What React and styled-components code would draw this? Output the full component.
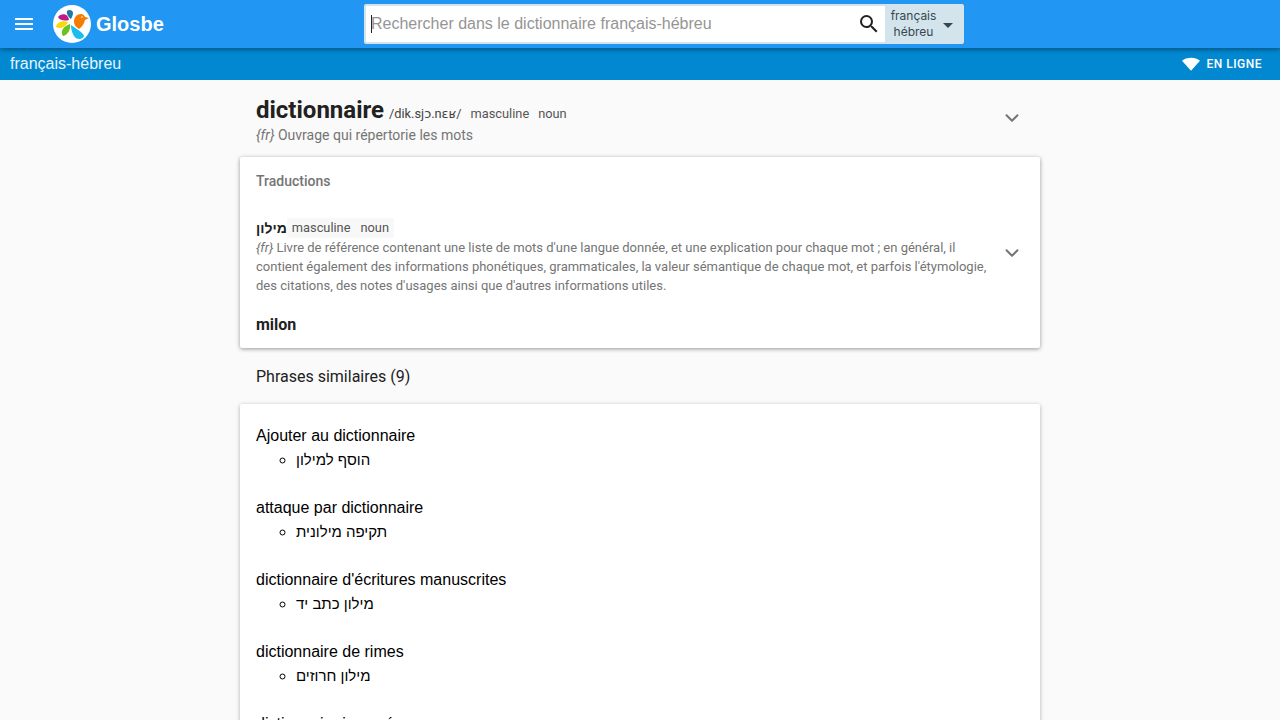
import styled, { createGlobalStyle } from "styled-components";
import { ChevronDown } from "lucide-react";

const phrases = [
  { fr: "Ajouter au dictionnaire", he: "הוסף למילון" },
  { fr: "attaque par dictionnaire", he: "תקיפה מילונית" },
  { fr: "dictionnaire d'écritures manuscrites", he: "מילון כתב יד" },
  { fr: "dictionnaire de rimes", he: "מילון חרוזים" },
  { fr: "dictionnaire inversé", he: "מילון הפוך" },
];

const GlobalStyle = createGlobalStyle`
  html, body {
    margin: 0;
    height: 720px;
    overflow: hidden;
    background: #fafafa;
    font-family: Roboto, sans-serif;
  }
`;

function Logo() {
  return (
    <LogoDisc viewBox="0 0 38 38">
      <circle cx="19" cy="19" r="19" fill="#fff" />
      <path d="M14 6c2-2 6-1 6 2 0 2-1 4-2 6-2-1-5-5-4-8z" fill="#1f7a9c" />
      <path d="M5 12c3-4 10-4 11 3-4 1-9 1-11-3z" fill="#c2188b" />
      <path d="M3 22c0-4 6-7 12-5-2 4-7 8-12 5z" fill="#f5d90a" />
      <path d="M10 31c-3-4 0-10 7-12 1 5-2 11-7 12z" fill="#6ac21c" />
      <path d="M18 20c4 3 13 8 13 11-1 4-8 4-10 0-2-3-3-7-3-11z" fill="#1bbcee" />
      <path d="M21 17c0-5 3-8 7-8 2 0 3 1 4 3l4 1-4 2c-1 4-3 7-6 9-3-2-5-4-5-7z" fill="#f57c00" />
      <circle cx="29" cy="12" r="0.8" fill="#fff" />
    </LogoDisc>
  );
}

export default function App() {
  return (
    <>
      <GlobalStyle />
      <TopBar>
        <MenuButton viewBox="0 0 24 24">
          <path d="M3 18h18v-2H3v2zm0-5h18v-2H3v2zm0-7v2h18V6H3z" />
        </MenuButton>
        <Logo />
        <Brand>Glosbe</Brand>
        <SearchBox>
          <SearchField>
            <Caret />
            <Placeholder>Rechercher dans le dictionnaire français-hébreu</Placeholder>
          </SearchField>
          <SearchIcon viewBox="0 0 24 24">
            <path d="M15.5 14h-.79l-.28-.27A6.47 6.47 0 0 0 16 9.5 6.5 6.5 0 1 0 9.5 16c1.61 0 3.09-.59 4.23-1.57l.27.28v.79l5 4.99L20.49 19l-4.99-5zm-6 0C7.01 14 5 11.99 5 9.5S7.01 5 9.5 5 14 7.01 14 9.5 11.99 14 9.5 14z" />
          </SearchIcon>
          <LangPicker>
            <LangNames>
              <span>français</span>
              <span>hébreu</span>
            </LangNames>
            <LangArrow />
          </LangPicker>
        </SearchBox>
      </TopBar>
      <SubBar>
        <SubTitle>français-hébreu</SubTitle>
        <OnlineStatus>
          <svg width="18" height="18" viewBox="0 0 24 24" fill="#fff">
            <path d="M12 21 0 7.5C3 5 7.3 3.5 12 3.5S21 5 24 7.5L12 21z" />
          </svg>
          EN LIGNE
        </OnlineStatus>
      </SubBar>
      <Main>
        <Entry>
          <div>
            <HeadLine>
              <Word>dictionnaire</Word>
              <Phonetic>/dik.sjɔ.nɛʁ/</Phonetic>
              <Tag>masculine</Tag>
              <Tag>noun</Tag>
            </HeadLine>
            <Definition>
              <i>{"{fr}"}</i> Ouvrage qui répertorie les mots
            </Definition>
          </div>
          <Chevron $top={11} size={22} strokeWidth={2.2} />
        </Entry>
        <Card>
          <CardLabel>Traductions</CardLabel>
          <Translation>
            <div>
              <TranslationLine>
                <HebrewWord>מילון</HebrewWord>
                <TagGroup>
                  <span>masculine</span>
                  <span>noun</span>
                </TagGroup>
              </TranslationLine>
              <TranslationText>
                <i>{"{fr}"}</i> Livre de référence contenant une liste de mots d'une langue donnée, et une
                explication pour chaque mot ; en général, il contient également des informations
                phonétiques, grammaticales, la valeur sémantique de chaque mot, et parfois
                l'étymologie, des citations, des notes d'usages ainsi que d'autres informations utiles.
              </TranslationText>
            </div>
            <Chevron $top={25} size={22} strokeWidth={2.2} />
          </Translation>
          <Transliteration>milon</Transliteration>
        </Card>
        <SectionTitle>Phrases similaires (9)</SectionTitle>
        <PhraseCard>
          {phrases.map((phrase) => (
            <Phrase key={phrase.fr}>
              <div>{phrase.fr}</div>
              <PhraseList>
                <li>{phrase.he}</li>
              </PhraseList>
            </Phrase>
          ))}
        </PhraseCard>
      </Main>
    </>
  );
}

const TopBar = styled.header`
  position: relative;
  z-index: 2;
  height: 48px;
  display: flex;
  align-items: center;
  background: #2196f3;
  box-shadow: 0 2px 4px rgba(0, 0, 0, 0.35);
`;

const MenuButton = styled.svg`
  width: 24px;
  height: 24px;
  margin-left: 12px;
  fill: #fff;
`;

const LogoDisc = styled.svg`
  width: 38px;
  height: 38px;
  margin-left: 17px;
  flex: none;
`;

const Brand = styled.div`
  width: 268px;
  margin-left: 5px;
  color: #fff;
  font: bold 20px "Liberation Sans", Arial, sans-serif;
`;

const SearchBox = styled.div`
  width: 600px;
  height: 40px;
  box-sizing: border-box;
  display: flex;
  align-items: center;
  background: #fff;
  border: 2px solid #d3e4ed;
  border-radius: 2px;
`;

const SearchField = styled.div`
  flex: 1;
  display: flex;
  align-items: center;
  padding-left: 5px;
`;

const Caret = styled.span`
  width: 1px;
  height: 18px;
  margin-right: -1px;
  background: #222;
`;

const Placeholder = styled.span`
  color: #959595;
  font: 16px "Liberation Sans", Arial, sans-serif;
`;

const SearchIcon = styled.svg`
  width: 24px;
  height: 24px;
  margin-right: 4px;
  fill: #212121;
`;

const LangPicker = styled.div`
  width: 77px;
  height: 36px;
  display: flex;
  align-items: center;
  background: #d3e4ed;
`;

const LangNames = styled.div`
  width: 57px;
  display: flex;
  flex-direction: column;
  align-items: center;
  color: #37474f;
  font: 12px/16px Inter, sans-serif;
`;

const LangArrow = styled.span`
  margin-left: 1px;
  border-left: 5px solid transparent;
  border-right: 5px solid transparent;
  border-top: 5px solid #37474f;
  margin-top: 2px;
`;

const SubBar = styled.div`
  height: 32px;
  display: flex;
  align-items: center;
  justify-content: space-between;
  padding: 0 18px 0 10px;
  background: #0288d1;
  color: #fff;
`;

const SubTitle = styled.div`
  font: 16px "Liberation Sans", Arial, sans-serif;
  color: #e6f4fc;
`;

const OnlineStatus = styled.div`
  display: flex;
  align-items: center;
  gap: 6px;
  font: 500 12px Roboto, sans-serif;
  letter-spacing: 0.5px;
`;

const Main = styled.main`
  width: 800px;
  margin: 0 auto;
`;

const Entry = styled.section`
  height: 77px;
  box-sizing: border-box;
  padding: 16px 16px 0;
  display: flex;
  justify-content: space-between;
  align-items: flex-start;
`;

const HeadLine = styled.div`
  display: flex;
  align-items: baseline;
  height: 28px;
`;

const Word = styled.span`
  font: 700 24px/28px Roboto, sans-serif;
  color: #212121;
`;

const Phonetic = styled.span`
  margin-left: 5px;
  font: 12.8px Roboto, "DejaVu Sans", sans-serif;
  color: #444;
`;

const Tag = styled.span`
  margin-left: 9px;
  font: 12.8px Roboto, sans-serif;
  color: #555;
`;

const Definition = styled.div`
  margin-top: 1px;
  font: 14px/20px Roboto, sans-serif;
  color: #757575;
`;

const Chevron = styled(ChevronDown)`
  flex: none;
  margin: ${(props) => props.$top}px 1px 0 0;
  color: #757575;
`;

const Card = styled.section`
  height: 191px;
  box-sizing: border-box;
  padding: 16px 16px 0;
  background: #fff;
  border-radius: 2px;
  box-shadow: 0 1px 4px rgba(0, 0, 0, 0.4);
`;

const CardLabel = styled.div`
  font: 500 14px/16px Roboto, sans-serif;
  color: #757575;
`;

const Translation = styled.div`
  margin-top: 28px;
  display: flex;
  align-items: flex-start;
  justify-content: space-between;
  gap: 12px;
`;

const TranslationLine = styled.div`
  display: flex;
  align-items: center;
  height: 21px;
`;

const HebrewWord = styled.strong`
  font: 700 14px Roboto, "Liberation Sans", sans-serif;
  color: #212121;
`;

const TagGroup = styled.span`
  display: flex;
  gap: 10px;
  padding: 0 5px;
  background: #f8f8f8;
  font: 12.8px/20px Roboto, sans-serif;
  color: #555;
`;

const TranslationText = styled.div`
  font: 13px/19px Roboto, sans-serif;
  color: #757575;
`;

const Transliteration = styled.div`
  margin-top: 20px;
  font: 700 16px/20px Roboto, sans-serif;
  color: #212121;
`;

const SectionTitle = styled.h2`
  margin: 0;
  height: 56px;
  padding-left: 16px;
  display: flex;
  align-items: center;
  font: 16px Roboto, sans-serif;
  color: #212121;
`;

const PhraseCard = styled.section`
  padding: 21px 16px 20px;
  background: #fff;
  border-radius: 2px;
  box-shadow: 0 1px 4px rgba(0, 0, 0, 0.3);
`;

const Phrase = styled.div`
  height: 72px;
  font: 16px/22px "Liberation Sans", Arial, sans-serif;
  color: #000;
`;

const PhraseList = styled.ul`
  margin: 0;
  padding-left: 40px;
  list-style: circle;
  font-size: 15px;
  line-height: 26px;
`;
